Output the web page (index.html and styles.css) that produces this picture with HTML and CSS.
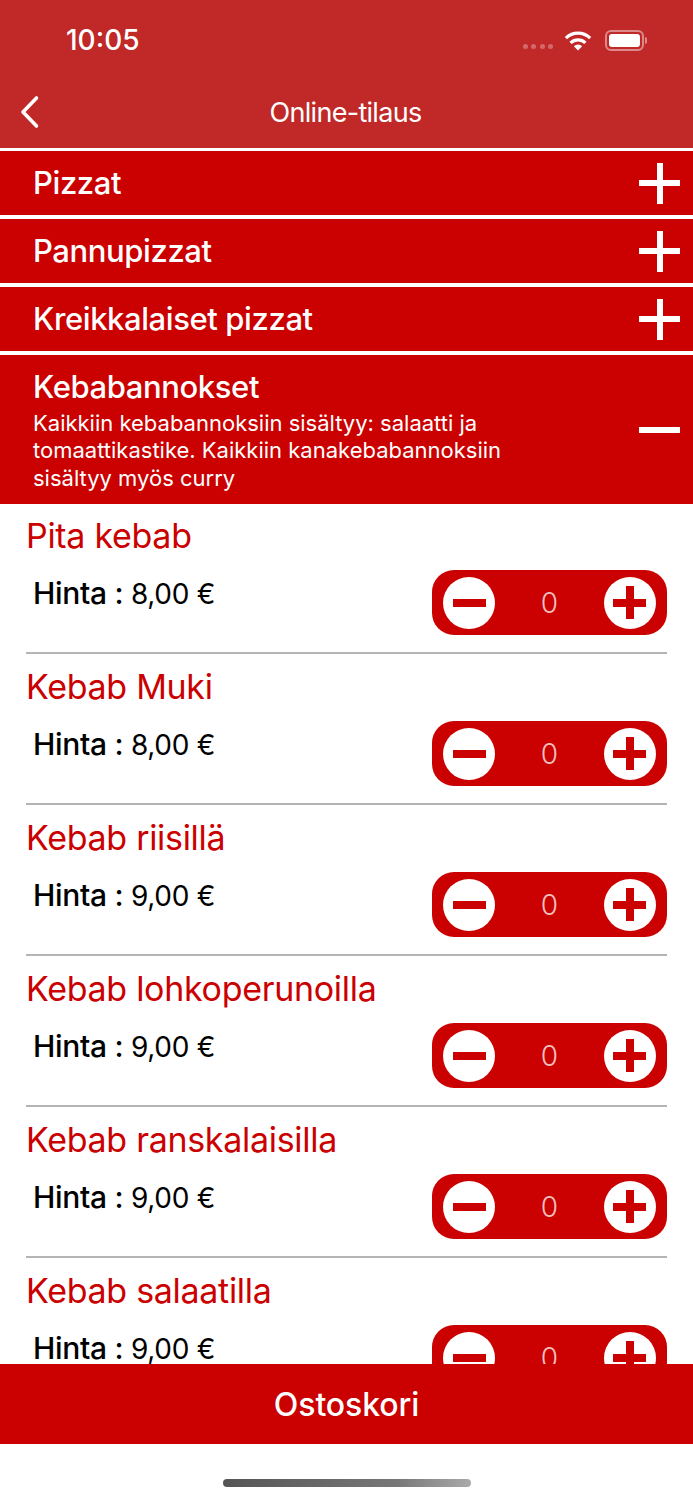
FILE: index.html
```html
<!DOCTYPE html>
<html lang="fi">
<head>
    <meta charset="UTF-8">
    <meta name="viewport" content="width=device-width, initial-scale=1.0">
    <title>Online-tilaus</title>
    <link rel="stylesheet" href="styles.css">
</head>
<body>
    <header class="top">
        <div class="status">
            <span class="time">10:05</span>
            <div class="status-icons">
                <span class="signal"><i></i><i></i><i></i><i></i></span>
                <svg class="wifi" width="28" height="21" viewBox="0 0 30 22">
                    <path d="M2 8.5a18.5 18.5 0 0 1 26 0" fill="none" stroke="#fff" stroke-width="3.4"/>
                    <path d="M7 13.5a11.5 11.5 0 0 1 16 0" fill="none" stroke="#fff" stroke-width="3.4"/>
                    <path d="M10.6 17.2a6.2 6.2 0 0 1 8.8 0L15 21.6z" fill="#fff"/>
                </svg>
                <span class="battery"><span class="battery-fill"></span></span>
                <span class="battery-cap"></span>
            </div>
        </div>
        <nav class="navbar">
            <svg class="back" width="22" height="34" viewBox="0 0 22 34">
                <path d="M17.5 3 L4 17 L17.5 31" fill="none" stroke="#fff" stroke-width="3.6" stroke-linecap="round" stroke-linejoin="round"/>
            </svg>
            <span class="nav-title">Online-tilaus</span>
        </nav>
    </header>

    <section class="cat">
        <span class="cat-name">Pizzat</span>
        <span class="cat-toggle"></span>
    </section>
    <section class="cat">
        <span class="cat-name">Pannupizzat</span>
        <span class="cat-toggle"></span>
    </section>
    <section class="cat">
        <span class="cat-name">Kreikkalaiset pizzat</span>
        <span class="cat-toggle"></span>
    </section>
    <section class="cat cat-open">
        <div class="cat-text">
            <span class="cat-name">Kebabannokset</span>
            <p class="cat-desc">Kaikkiin kebabannoksiin sisältyy: salaatti ja tomaattikastike. Kaikkiin kanakebabannoksiin sisältyy myös curry</p>
        </div>
        <span class="cat-toggle minus"></span>
    </section>

    <main class="list">
        <article class="item">
            <h2 class="item-name">Pita kebab</h2>
            <div class="item-row">
                <p class="price"><b>Hinta :</b> 8,00 €</p>
                <div class="stepper">
                    <span class="step minus-step"></span>
                    <span class="qty">0</span>
                    <span class="step plus-step"></span>
                </div>
            </div>
        </article>
        <article class="item">
            <h2 class="item-name">Kebab Muki</h2>
            <div class="item-row">
                <p class="price"><b>Hinta :</b> 8,00 €</p>
                <div class="stepper">
                    <span class="step minus-step"></span>
                    <span class="qty">0</span>
                    <span class="step plus-step"></span>
                </div>
            </div>
        </article>
        <article class="item">
            <h2 class="item-name">Kebab riisillä</h2>
            <div class="item-row">
                <p class="price"><b>Hinta :</b> 9,00 €</p>
                <div class="stepper">
                    <span class="step minus-step"></span>
                    <span class="qty">0</span>
                    <span class="step plus-step"></span>
                </div>
            </div>
        </article>
        <article class="item">
            <h2 class="item-name">Kebab lohkoperunoilla</h2>
            <div class="item-row">
                <p class="price"><b>Hinta :</b> 9,00 €</p>
                <div class="stepper">
                    <span class="step minus-step"></span>
                    <span class="qty">0</span>
                    <span class="step plus-step"></span>
                </div>
            </div>
        </article>
        <article class="item">
            <h2 class="item-name">Kebab ranskalaisilla</h2>
            <div class="item-row">
                <p class="price"><b>Hinta :</b> 9,00 €</p>
                <div class="stepper">
                    <span class="step minus-step"></span>
                    <span class="qty">0</span>
                    <span class="step plus-step"></span>
                </div>
            </div>
        </article>
        <article class="item">
            <h2 class="item-name">Kebab salaatilla</h2>
            <div class="item-row">
                <p class="price"><b>Hinta :</b> 9,00 €</p>
                <div class="stepper">
                    <span class="step minus-step"></span>
                    <span class="qty">0</span>
                    <span class="step plus-step"></span>
                </div>
            </div>
        </article>
    </main>

    <button class="cart" type="button">Ostoskori</button>
    <div class="home-area"><span class="home-bar"></span></div>
</body>
</html>
```

FILE: styles.css
```css
* { box-sizing: border-box; }
html, body { height: 100%; }
body {
    font-family: Inter, "Liberation Sans", sans-serif;
    margin: 0;
    height: 1500px;
    background: #fff;
    color: #000;
    display: flex;
    flex-direction: column;
    overflow: hidden;
}

/* status + nav */
.top {
    background: #c12828;
    color: #fff;
    height: 148px;
    flex: none;
}
.status {
    height: 80px;
    display: flex;
    align-items: center;
    justify-content: space-between;
    padding: 0 46px 0 66px;
}
.time { font-size: 28px; font-weight: 500; }
.status-icons { display: flex; align-items: center; }
.signal { display: flex; gap: 3.5px; margin-right: 11px; margin-top: 12px; }
.signal i {
    display: block;
    width: 5px;
    height: 5px;
    border-radius: 50%;
    background: rgba(255, 255, 255, 0.3);
}
.wifi { margin-right: 13px; }
.battery {
    width: 39px;
    height: 21px;
    border: 2px solid rgba(255, 255, 255, 0.45);
    border-radius: 6px;
    padding: 2px;
    display: block;
}
.battery-fill { display: block; height: 100%; background: #fff; border-radius: 3px; }
.battery-cap {
    width: 2px;
    height: 7px;
    margin-left: 1px;
    background: rgba(255, 255, 255, 0.45);
    border-radius: 0 2px 2px 0;
}
.navbar {
    height: 68px;
    margin-top: -2px;
    position: relative;
    display: flex;
    align-items: center;
    justify-content: center;
}
.back { position: absolute; left: 19px; top: 17px; }
.nav-title { font-size: 27px; letter-spacing: -0.7px; margin-top: 1px; margin-right: 2px; }

/* categories */
.cat {
    flex: none;
    background: #cb0000;
    color: #fff;
    height: 64px;
    margin-top: 4px;
    padding: 0 13px 0 33px;
    display: flex;
    align-items: center;
    justify-content: space-between;
}
.top + .cat { margin-top: 3px; }
.cat-name { font-size: 31px; font-weight: 500; letter-spacing: -0.4px; margin-top: -2px; }
.cat-toggle {
    width: 41px;
    height: 41px;
    flex: none;
    background:
        linear-gradient(#fff, #fff) center / 100% 6px no-repeat,
        linear-gradient(#fff, #fff) center / 6px 100% no-repeat;
}
.cat-toggle.minus {
    height: 6px;
    background: #fff;
    margin-top: 1px;
}
.cat-open {
    height: 149px;
    align-items: center;
}
.cat-text { width: 520px; align-self: flex-start; padding-top: 15px; }
.cat-text .cat-name { display: block; line-height: 38px; }
.cat-desc {
    margin: 4px 0 0;
    font-size: 22px;
    line-height: 27.4px;
}

/* products */
.list {
    flex: 1;
    min-height: 0;
    overflow: hidden;
    padding: 0 26px;
}
.item {
    height: 150px;
    margin-bottom: 1px;
    border-bottom: 2px solid #b4b4b4;
    padding-top: 12px;
}
.item-name {
    margin: 0;
    font-size: 34px;
    line-height: 40px;
    font-weight: 400;
    letter-spacing: -0.3px;
    color: #cb0000;
}
.item-row {
    display: flex;
    justify-content: space-between;
    align-items: flex-start;
    margin-top: 14px;
}
.price {
    margin: 3px 0 0 7px;
    font-size: 28px;
    line-height: 40px;
    letter-spacing: -0.3px;
}
.price b { font-weight: 500; font-size: 30px; }
.stepper {
    width: 235px;
    height: 65px;
    background: #cb0000;
    border-radius: 22px;
    display: flex;
    align-items: center;
    justify-content: space-between;
    padding: 0 11px;
    margin-top: 0;
}
.step {
    width: 52px;
    height: 52px;
    border-radius: 50%;
    background-color: #fff;
    background-repeat: no-repeat;
    background-position: center;
}
.minus-step {
    background-image: linear-gradient(#cb0000, #cb0000);
    background-size: 33px 8px;
}
.plus-step {
    background-image: linear-gradient(#cb0000, #cb0000), linear-gradient(#cb0000, #cb0000);
    background-size: 33px 8px, 8px 33px;
}
.qty { font-size: 28px; color: rgba(255, 255, 255, 0.75); font-weight: 300; }

/* bottom */
.cart {
    flex: none;
    height: 80px;
    border: none;
    background: #cb0000;
    color: #fff;
    font-family: inherit;
    font-size: 32px;
    font-weight: 500;
    letter-spacing: -0.1px;
    padding: 0;
}
.home-area {
    flex: none;
    height: 56px;
    display: flex;
    justify-content: center;
    padding-top: 35px;
}
.home-bar {
    width: 248px;
    height: 8px;
    border-radius: 4px;
    background: linear-gradient(90deg, #555, #777 70%, #aaa);
}
```
